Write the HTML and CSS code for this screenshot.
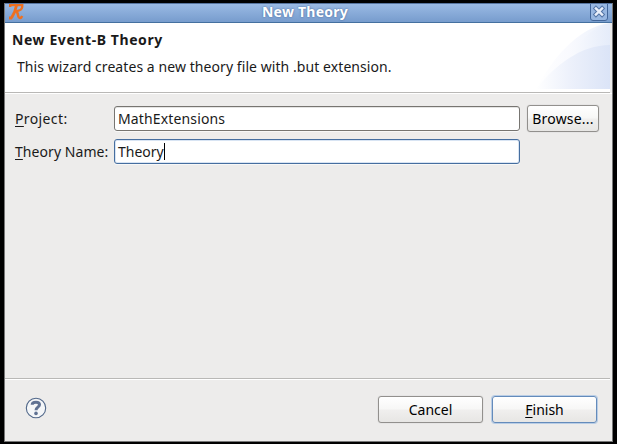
FILE: index.html
```html
<!DOCTYPE html>
<html lang="en">
<head>
<meta charset="utf-8">
<title>New Theory</title>
<link rel="stylesheet" href="styles.css">
</head>
<body>
<div class="window">
  <div class="titlebar">
    <svg class="logo" width="16" height="16" viewBox="0 0 16 16" fill="none" stroke="#ee7020">
      <path d="M1.2 3V1H13.2V3C13 5.5 10 7 6.2 7.4" stroke-width="2.4"/>
      <path d="M7.6 1 5.6 8 2.4 14.2M0 14H3" stroke-width="2.8"/>
      <path d="M7 7.5C9.8 8 8.2 13.4 10.5 13.9 12 14.2 12.6 13.4 13.2 12" stroke-width="2.5"/>
    </svg>
    <span class="caption">New Theory</span>
    <span class="close">
      <svg width="18" height="17" viewBox="0 0 18 17">
        <path d="M.5 0V14Q.5 16.5 3 16.5H15Q17.5 16.5 17.5 14V0" fill="#98b7e1" stroke="#42669a"/>
        <path d="M5.9 4.4 12.1 10.6M12.1 4.4 5.9 10.6" stroke="#5374a5" stroke-width="4.4" stroke-linecap="square"/>
        <path d="M5.9 4.4 12.1 10.6M12.1 4.4 5.9 10.6" stroke="#e9effa" stroke-width="2.4" stroke-linecap="square"/>
      </svg>
    </span>
  </div>
  <div class="banner">
    <div class="banner-text">
      <h1>New Event-B Theory</h1>
      <p>This wizard creates a new theory file with .but extension.</p>
    </div>
    <svg class="swoosh" width="75" height="66" viewBox="0 0 75 66">
      <defs>
        <linearGradient id="outer"><stop offset="0" stop-color="#fff"/><stop offset=".45" stop-color="#f9fafe"/><stop offset="1" stop-color="#eaf0fb"/></linearGradient>
        <linearGradient id="middle"><stop offset="0" stop-color="#fafbfe"/><stop offset="1" stop-color="#e5ecfa"/></linearGradient>
        <linearGradient id="inner"><stop offset="0" stop-color="#fff"/><stop offset=".45" stop-color="#edf1fb"/><stop offset="1" stop-color="#dbe4f7"/></linearGradient>
      </defs>
      <path d="M1 66C16 38 42 4 75 0V66Z" fill="url(#outer)"/>
      <path d="M34 38C42 21 56 4 75 0V38Z" fill="url(#middle)"/>
      <path d="M1 66C20 42 46 22 75 22V66Z" fill="url(#inner)"/>
    </svg>
  </div>
  <div class="form">
    <label class="l-project"><u>P</u>roject:</label>
    <div class="field"><span class="v-project">MathExtensions</span></div>
    <div class="button browse"><span>Browse...</span></div>
    <label class="l-name"><u>T</u>heory Name:</label>
    <div class="field focused"><span>Theory</span><i class="caret"></i></div>
  </div>
  <div class="footer">
    <svg class="help" width="22" height="22" viewBox="0 0 22 22" fill="none">
      <circle cx="11" cy="11" r="9.7" fill="#f4f6f8" stroke="#506789" stroke-width="1.1"/>
      <path d="M7.2 7.8C7.2 5.8 8.8 5.2 11 5.2 13.5 5.2 14.5 6.2 14.5 7.8 14.5 10.2 11 10.2 11 13.2" stroke="#5f7192" stroke-width="3"/>
      <circle cx="11" cy="16.4" r="1.8" fill="#5f7192"/>
    </svg>
    <div class="button action cancel"><span>Cancel</span></div>
    <div class="button action default"><span><u>F</u>inish</span></div>
  </div>
</div>
</body>
</html>
```
FILE: styles.css
```css
* { box-sizing: border-box; }
body {
  margin: 0;
  width: 617px;
  height: 444px;
  padding: 3px 4px;
  background: #000;
  overflow: hidden;
  color: #1a1a1a;
  font: 14px/20px "Noto Sans", "Open Sans", sans-serif;
}
.window {
  width: 609px;
  height: 439px;
  display: flex;
  flex-direction: column;
  background: #edeceb;
  border: solid #777;
  border-width: 0 1px 1px;
}
.titlebar {
  flex: none;
  height: 20px;
  display: grid;
  grid-template-columns: 20px 1fr 24px;
  background: linear-gradient(#9abae4, #779ccd);
  border-top: 1px solid #56749f;
  border-bottom: 1px solid #44709f;
}
.logo { margin-left: 4px; }
.caption {
  justify-self: center;
  margin-right: 3px;
  color: #fff;
  font-weight: 700;
  line-height: 16px;
  letter-spacing: .25px;
  text-shadow: 0 0 2px #3d5e91;
}
.close { padding-left: 2px; line-height: 0; }
.banner {
  flex: none;
  height: 70px;
  margin-right: 2px;
  display: flex;
  justify-content: space-between;
  background: #fff;
  border-bottom: 1px solid #b9b8b6;
}
.banner-text { padding: 7px 0 0 7px; white-space: nowrap; }
h1 { margin: 0; font-size: 14px; line-height: 20px; letter-spacing: .58px; }
p { margin: 7px 0 0 5px; line-height: 20px; letter-spacing: .07px; }
.form {
  flex: 1;
  display: grid;
  grid-template-columns: 92px 406px 72px;
  grid-template-rows: 27px 27px;
  column-gap: 7px;
  row-gap: 6px;
  align-content: start;
  align-items: center;
  padding: 11px 0 0 10px;
  border-top: 1px solid #fff;
  white-space: nowrap;
}
.l-project { letter-spacing: .38px; }
.l-name { letter-spacing: .06px; }
.v-project { letter-spacing: .14px; }
.browse { letter-spacing: .2px; }
u { text-decoration: underline; text-underline-offset: 2px; text-decoration-thickness: 1px; text-decoration-skip-ink: none; }
.field {
  height: 25px;
  display: flex;
  align-items: center;
  padding-left: 3px;
  background: #fff;
  border: 1px solid #777571;
  border-radius: 3px;
  box-shadow: 0 1px #f8f8f7, inset 0 1px #e4e4e3;
}
.focused { border-color: #466e9f; box-shadow: inset 0 0 0 1px #d8e4f3, 0 1px #f8f8f7; }
.caret { width: 1px; height: 17px; background: #000; }
.button {
  height: 27px;
  display: flex;
  align-items: center;
  justify-content: center;
  color: #000;
  border: 1px solid #92908d;
  border-radius: 3px;
  background: linear-gradient(#fff, #f7f7f6 48%, #f0efee 52%, #e7e6e4);
  box-shadow: 0 0 1px #aaa;
}
.footer {
  flex: none;
  height: 63px;
  display: flex;
  margin-right: 2px;
  padding: 17px 13px 0 20px;
  border-top: 1px solid #b9b8b6;
  box-shadow: inset 0 1px #fff;
}
.help { margin-top: 1px; }
.action { width: 105px; }
.cancel { margin-left: auto; margin-right: 9px; }
.default { border-color: #648bbb; box-shadow: 0 0 0 1px #b9cde5; }
```
